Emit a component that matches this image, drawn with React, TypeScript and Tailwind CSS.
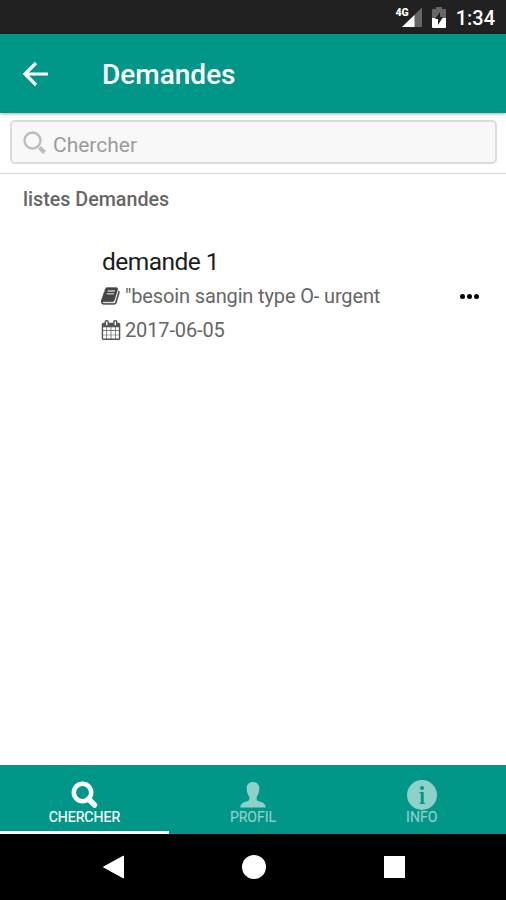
import type { ReactNode } from "react";

interface TabProps {
  label: string;
  active?: boolean;
  children: ReactNode;
}

function StatusBar() {
  return (
    <div className="h-[34px] bg-[#212121] flex items-center justify-end pr-[11px] text-white flex-shrink-0">
      <svg width="27" height="22" viewBox="0 0 27 22" className="mr-[10px]">
        <path d="M27 1.500v19.500H7z" fill="#666" />
        <path d="M19.500 9V21H7z" fill="#fff" />
        <path d="M0 0h14v10.500H0z" fill="#212121" />
        <text x="0.500" y="10" fontSize="10.500" fontWeight="900" fontFamily="Roboto, sans-serif" fill="#fff">4G</text>
      </svg>
      <svg width="14" height="22" viewBox="0 0 14 22" className="mr-[10px]">
        <path d="M4 1h6v2h3a1 1 0 0 1 1 1v9H0V4a1 1 0 0 1 1-1h3z" fill="#666" />
        <path d="M0 12h14v9a1 1 0 0 1-1 1H1a1 1 0 0 1-1-1z" fill="#fff" />
        <path d="M8 6v5h3l-5 8v-6H3z" fill="#212121" />
      </svg>
      <span className="text-[20px] leading-none font-medium pt-[2px]">1:34</span>
    </div>
  );
}

function Header() {
  return (
    <header className="relative z-10 h-[79px] bg-[#009688] flex items-center text-white shadow-[0_1px_3px_rgba(0,0,0,0.35)] flex-shrink-0">
      <svg width="26" height="26" viewBox="0 0 26 26" fill="none" stroke="currentColor" strokeWidth="3.2" className="ml-[22px]">
        <path d="M26 13H3M14 2L3 13l11 11" />
      </svg>
      <h1 className="ml-[54px] pt-[2px] text-[28px] leading-none font-medium">Demandes</h1>
    </header>
  );
}

function SearchBar() {
  return (
    <div className="h-[61px] pt-[7px] pl-[10px] pr-[9px] border-b border-[#dadada] flex-shrink-0">
      <div className="h-[44px] rounded-[5px] border-2 border-[#dcdcdc] bg-[#f8f8f8] flex items-center pl-[11px]">
        <svg width="24" height="24" viewBox="0 0 24 24" fill="none" stroke="#bcbcbc" className="mt-px">
          <circle cx="9.5" cy="9.5" r="8" strokeWidth="2.4" />
          <path d="M16.5 16.5l5 5" strokeWidth="4" />
        </svg>
        <span className="ml-[6px] pt-[6px] text-[21px] leading-none text-[#9b9b9b]">Chercher</span>
      </div>
    </div>
  );
}

function BookIcon() {
  return (
    <svg width="20" height="20" viewBox="0 0 1792 1792" fill="#444" stroke="#444" strokeWidth="30">
      <path d="M1639 478q40 57 18 129l-275 906q-19 64-76.5 107.5t-122.5 43.5h-923q-77 0-148.5-53.5t-99.5-131.5q-24-67-2-127 0-4 3-27t4-37q1-8-3-21.5t-3-19.5q2-11 8-21t16.5-23.5 16.5-23.5q23-38 45-91.5t30-91.5q3-10 .5-30t-.5-28q3-11 17-28t17-23q21-36 42-92t25-90q1-9-2.5-32t.5-28q4-13 22-30.5t22-22.5q19-26 42.5-84.5t27.5-96.5q1-8-3-25.5t-2-26.5q2-8 9-18t18-23 17-21q8-12 16.5-30.5t15-35 16-36 19.5-32 26.5-23.5 36-11.5 47.5 5.5l-1 3q38-9 51-9h761q74 0 114 56t18 130l-274 906q-36 119-71.5 153.5t-128.5 34.5h-869q-27 0-38 15-11 16-1 43 24 70 144 70h923q29 0 56-15.5t35-41.5l300-987q7-22 5-57 38 15 59 43zm-1064 2q-4 13 2 22.5t20 9.5h608q13 0 25.5-9.5t16.5-22.5l21-64q4-13-2-22.5t-20-9.5h-608q-13 0-25.5 9.5t-16.5 22.5zm-83 256q-4 13 2 22.5t20 9.5h608q13 0 25.5-9.5t16.5-22.5l21-64q4-13-2-22.5t-20-9.5h-608q-13 0-25.5 9.5t-16.5 22.5z" />
    </svg>
  );
}

function CalendarIcon() {
  return (
    <svg width="20" height="20" viewBox="0 0 1792 1792" fill="#555">
      <path d="M192 1664h288v-288h-288v288zm352 0h320v-288h-320v288zm-352-352h288v-320h-288v320zm352 0h320v-320h-320v320zm-352-384h288v-288h-288v288zm736 736h320v-288h-320v288zm-384-736h320v-288h-320v288zm768 736h288v-288h-288v288zm-384-352h320v-320h-320v320zm-352-864v-288q0-13-9.5-22.5t-22.5-9.5h-64q-13 0-22.5 9.5t-9.5 22.5v288q0 13 9.5 22.5t22.5 9.5h64q13 0 22.5-9.5t9.5-22.5zm736 864h288v-320h-288v320zm-384-384h320v-288h-320v288zm384 0h288v-288h-288v288zm32-480v-288q0-13-9.5-22.5t-22.5-9.5h-64q-13 0-22.5 9.5t-9.5 22.5v288q0 13 9.5 22.5t22.5 9.5h64q13 0 22.5-9.5t9.5-22.5zm384-64v1280q0 52-38 90t-90 38h-1408q-52 0-90-38t-38-90v-1280q0-52 38-90t90-38h128v-96q0-66 47-113t113-47h64q66 0 113 47t47 113v96h384v-96q0-66 47-113t113-47h64q66 0 113 47t47 113v96h128q52 0 90 38t38 90z" />
    </svg>
  );
}

function RequestItem() {
  return (
    <div className="mt-[34px] ml-[101px] mr-[27px] flex items-center justify-between">
      <div>
        <h3 className="pl-px text-[24.5px] tracking-[-0.55px] leading-[34px] text-[#1c1c1c]">demande 1</h3>
        <p className="flex items-center gap-[4px] text-[20px] tracking-[-0.14px] leading-[34px] text-[#666]">
          <BookIcon />
          <span>"besoin sangin type O- urgent</span>
        </p>
        <p className="flex items-center gap-[4px] text-[20px] tracking-[-0.14px] leading-[34px] text-[#666]">
          <CalendarIcon />
          <span>2017-06-05</span>
        </p>
      </div>
      <button className="flex gap-[2px]">
        <span className="w-[5px] h-[5px] rounded-full bg-black" />
        <span className="w-[5px] h-[5px] rounded-full bg-black" />
        <span className="w-[5px] h-[5px] rounded-full bg-black" />
      </button>
    </div>
  );
}

function Tab({ label, active, children }: TabProps) {
  return (
    <button
      className={`flex-1 flex flex-col items-center pt-[15px] border-b-[3px] ${
        active ? "text-white border-white" : "text-[#8fd0c8] border-transparent"
      }`}
    >
      {children}
      <span className="text-[14px] leading-[14px] [-webkit-text-stroke:0.2px_currentColor]">{label}</span>
    </button>
  );
}

function TabBar() {
  return (
    <nav className="h-[69px] bg-[#009688] flex flex-shrink-0">
      <Tab label="CHERCHER" active>
        <svg width="30" height="30" viewBox="0 0 30 30" fill="none" stroke="currentColor">
          <circle cx="13.5" cy="12.500" r="8.700" strokeWidth="4.500" />
          <path d="M19.500 19l6 6" strokeWidth="5.500" strokeLinecap="round" />
        </svg>
      </Tab>
      <Tab label="PROFIL">
        <svg width="30" height="30" viewBox="0 0 30 30" fill="currentColor">
          <path d="M15 2c4 0 6.300 2.500 6.300 6 0 3.500-.6 6-2.300 8.200-.7 1.500-.6 3.800.6 4.500 2.500 1.300 7.900 1.400 8.200 6.800H2.200c.3-5.400 5.700-5.500 8.200-6.800 1.200-.7 1.300-3 .6-4.500C9.300 14 8.700 11.500 8.700 8c0-3.500 2.300-6 6.300-6z" />
        </svg>
      </Tab>
      <Tab label="INFO">
        <svg width="30" height="30" viewBox="0 0 30 30">
          <circle cx="15" cy="15" r="15" fill="currentColor" />
          <circle cx="15" cy="8" r="2" fill="#009688" />
          <path d="M12.500 12h4.200v10.800H18V24h-5.500v-1.200h1.300V13.200h-1.300z" fill="#009688" />
        </svg>
      </Tab>
    </nav>
  );
}

function NavigationBar() {
  return (
    <div className="h-[66px] pl-px bg-black flex items-center justify-center gap-[117px] flex-shrink-0">
      <svg width="24" height="24" viewBox="0 0 24 24" fill="#fff" stroke="#fff" strokeLinejoin="round">
        <path d="M22.500 1v22L2.500 12z" />
      </svg>
      <span className="w-[24px] h-[24px] rounded-full bg-white" />
      <span className="w-[24px] flex justify-center">
        <span className="w-[21px] h-[22px] bg-white" />
      </span>
    </div>
  );
}

export default function App() {
  return (
    <div className="w-[506px] h-[900px] bg-white flex flex-col overflow-hidden font-['Roboto',sans-serif]">
      <StatusBar />
      <Header />
      <SearchBar />
      <main className="flex-1">
        <h2 className="pt-[14px] pl-[23px] text-[19.7px] leading-[23px] font-medium text-[#666]">listes Demandes</h2>
        <RequestItem />
      </main>
      <TabBar />
      <NavigationBar />
    </div>
  );
}
